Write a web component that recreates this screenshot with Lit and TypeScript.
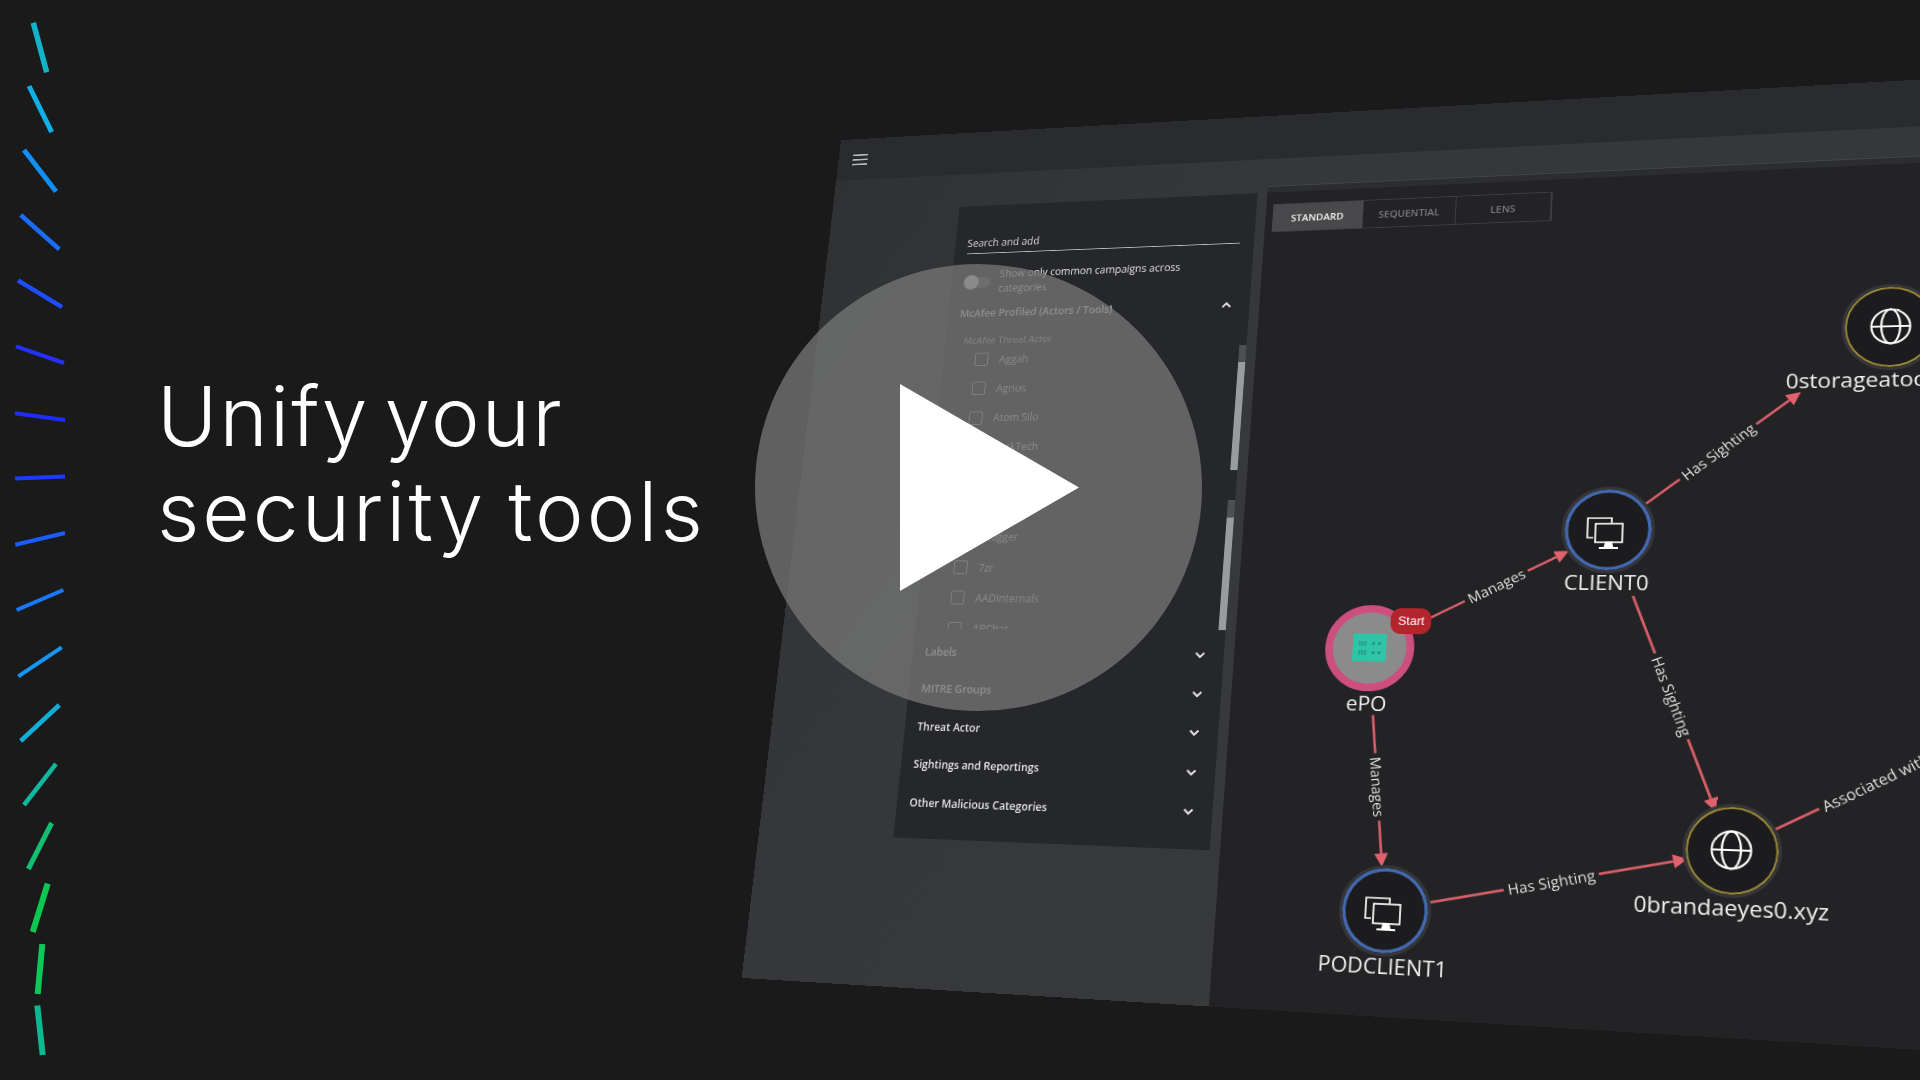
import { LitElement, css, html, svg } from 'lit';
import { customElement } from 'lit/decorators.js';

type Pt = [number, number];

// the product screenshot is a flat window pushed into perspective
const WIN_W = 1260;
const WIN_H = 1000;
const QUAD: Pt[] = [[841, 140], [1980, 76.2], [1985, 1054], [741.7, 978]];

function homography() {
  const [[x0, y0], [x1, y1], [x2, y2], [x3, y3]] = QUAD;
  const dx1 = x1 - x2, dx2 = x3 - x2, sx = x0 - x1 + x2 - x3;
  const dy1 = y1 - y2, dy2 = y3 - y2, sy = y0 - y1 + y2 - y3;
  const den = dx1 * dy2 - dx2 * dy1;
  const g = (sx * dy2 - dx2 * sy) / den;
  const h = (dx1 * sy - sx * dy1) / den;
  return {
    a: x1 - x0 + g * x1, b: x3 - x0 + h * x3, c: x0,
    d: y1 - y0 + g * y1, e: y3 - y0 + h * y3, f: y0, g, h,
  };
}
const M = homography();
const WINDOW_MATRIX = `matrix3d(${[
  M.a / WIN_W, M.d / WIN_W, 0, M.g / WIN_W,
  M.b / WIN_H, M.e / WIN_H, 0, M.h / WIN_H,
  0, 0, 1, 0,
  M.c, M.f, 0, 1,
].join(',')})`;

// screen position in the 1920x1080 shot -> position inside the flat window
function toFlat([x, y]: Pt): Pt {
  const p = M.a - M.g * x, q = M.b - M.h * x, r = x - M.c;
  const s = M.d - M.g * y, t = M.e - M.h * y, w = y - M.f;
  const den = p * t - q * s;
  return [((r * t - q * w) / den) * WIN_W, ((p * w - r * s) / den) * WIN_H];
}

const DASHES = [
  { p: [33.3, 22.7, 46.7, 72.3], c: '#10b4c8', w: 5.5 },
  { p: [29, 86, 51.7, 132.2], c: '#12aee6', w: 5 },
  { p: [24, 150, 56, 191.5], c: '#128ff5', w: 5 },
  { p: [20.7, 215, 59.3, 249.3], c: '#1a6cff', w: 4.5 },
  { p: [18, 280.3, 62, 307.2], c: '#1e4cff', w: 4.5 },
  { p: [16, 346.4, 64, 363], c: '#2430ff', w: 4 },
  { p: [15, 413.2, 65, 420], c: '#1f2cff', w: 4 },
  { p: [15, 478.6, 65, 476.6], c: '#1a3cff', w: 4 },
  { p: [15.3, 544.8, 65, 533], c: '#1a5cff', w: 4 },
  { p: [16.7, 610, 63.3, 590], c: '#1a78ff', w: 4 },
  { p: [18.3, 676.3, 61.7, 647.4], c: '#1596f0', w: 4 },
  { p: [20.7, 741, 59.3, 705], c: '#12aed8', w: 4.5 },
  { p: [24, 805, 56, 763.8], c: '#10b8a0', w: 4.5 },
  { p: [28.3, 869, 51.7, 823], c: '#10c070', w: 5 },
  { p: [32.7, 932, 47.7, 883.6], c: '#0cc850', w: 6 },
  { p: [37.7, 994, 42.3, 944], c: '#0cc858', w: 6 },
  { p: [37.3, 1005.5, 42.7, 1055], c: '#0cb890', w: 6 },
];

const ITEMS = ['Aggah', 'Agrius', 'Atom Silo', 'BlackTech', 'Cerber', 'Dridex', 'Blogger', '7zr', 'AADInternals', 'ABChat'];
const GROUPS = ['Labels', 'MITRE Groups', 'Threat Actor', 'Sightings and Reportings', 'Other Malicious Categories'];

const LINKS: { from: Pt; to: Pt; at: Pt; text: string; arrow: boolean }[] = [
  { from: [1430, 618], to: [1569, 551], at: [1495, 584], text: 'Manages', arrow: true },
  { from: [1373, 715], to: [1382, 867], at: [1377, 787], text: 'Manages', arrow: true },
  { from: [1427, 903], to: [1688, 859], at: [1552, 884], text: 'Has Sighting', arrow: true },
  { from: [1633, 596], to: [1716, 812], at: [1670, 697], text: 'Has Sighting', arrow: true },
  { from: [1643, 506], to: [1801, 392], at: [1718, 452], text: 'Has Sighting', arrow: true },
  { from: [1770, 832], to: [1960, 743], at: [1875, 782], text: 'Associated with', arrow: false },
];

const NODES: { at: Pt; name: string; kind: 'host' | 'site' | 'epo' }[] = [
  { at: [1608, 530], name: 'CLIENT0', kind: 'host' },
  { at: [1385, 911], name: 'PODCLIENT1', kind: 'host' },
  { at: [1369.5, 648], name: 'ePO', kind: 'epo' },
  { at: [1731.5, 850.5], name: '0brandaeyes0.xyz', kind: 'site' },
  { at: [1890.7, 326.7], name: '0storageatools.com', kind: 'site' },
];

const monitors = html`<svg class="glyph" viewBox="-24 -24 48 48" fill="none" stroke="#fff" stroke-width="1.7">
  <path d="M-14 8h-6v-21h24v5" />
  <rect x="-12" y="-7" width="27" height="20" />
  <path d="M-1 13h5l1 4h-7z M-8 19h19" fill="#fff" stroke-width="2" />
</svg>`;

const globe = html`<svg class="glyph" viewBox="-24 -24 48 48" fill="none" stroke="#fff" stroke-width="2">
  <circle r="18.5" />
  <ellipse rx="9" ry="18.5" />
  <path d="M-18.5 0h37" />
</svg>`;

const chip = html`<svg class="chip" viewBox="0 0 35 30">
  <rect width="35" height="30" fill="#2ec4a6" />
  <path d="M7 8v5M10 8v5M13 8v5M7 18v5M10 18v5M13 18v5" stroke="#2a8f80" stroke-width="1.4" />
  <path d="M20 10.500h3M26 10.500h3M20 20.500h3M26 20.500h3" stroke="#2a8f80" stroke-width="2.400" />
</svg>`;

const chevron = (up: boolean) => html`<svg class="chev" viewBox="0 0 12 8" fill="none" stroke="#e4e4e4" stroke-width="2.200">
  <path d=${up ? 'M1.500 6.500 6 2l4.500 4.500' : 'M1.500 1.500 6 6l4.500-4.500'} />
</svg>`;

@customElement('product-window')
export class ProductWindow extends LitElement {
  static get styles() {
    return css`
      :host {
        position: absolute;
        left: 0;
        top: 0;
        width: 1260px;
        height: 1000px;
        transform-origin: 0 0;
        background: #36373a;
        display: flex;
        flex-direction: column;
        overflow: hidden;
        font-family: 'Open Sans', 'Liberation Sans', sans-serif;
        color: #e4e4e4;
      }
      .topbar {
        flex: none;
        height: 53px;
        background: #2a2b2e;
        display: flex;
        align-items: center;
        padding-left: 18px;
      }
      .burger {
        width: 19px;
        height: 14px;
        display: flex;
        flex-direction: column;
        justify-content: space-between;
      }
      .burger i {
        height: 2px;
        background: #b9babb;
      }
      .body {
        flex: 1;
        display: flex;
        min-height: 0;
      }
      .sidebar {
        flex: none;
        width: 522px;
        box-sizing: border-box;
        padding: 41px 11px 0 158.6px;
        background: linear-gradient(120deg, #2f3133, #36373a 48%, #38393b);
      }
      .panel {
        position: relative;
        height: 744px;
        box-sizing: border-box;
        background: #26272a;
        padding: 30px 16px 0 15px;
      }
      .search {
        height: 29px;
        line-height: 33px;
        font-size: 12px;
        color: #d8d8d8;
        border-bottom: 1px solid #bdbdbd;
      }
      .common {
        margin-top: 17px;
        display: flex;
        align-items: center;
        gap: 11px;
        font-size: 12px;
        line-height: 18px;
      }
      .common span {
        width: 230px;
      }
      .switch {
        flex: none;
        width: 32px;
        height: 13px;
        border-radius: 7px;
        background: #57585b;
        position: relative;
      }
      .switch i {
        position: absolute;
        left: 0;
        top: -2.500px;
        width: 18px;
        height: 18px;
        border-radius: 50%;
        background: #d6d6d6;
      }
      .group {
        height: 42.500px;
        padding-right: 4px;
        display: flex;
        align-items: center;
        justify-content: space-between;
        font-size: 12px;
        font-weight: 600;
      }
      .group.open {
        height: 40px;
      }
      .chev {
        width: 12px;
        height: 8px;
      }
      .scroll {
        height: 355px;
        overflow: hidden;
      }
      .scroll h4 {
        margin: 0;
        padding: 8px 0 0 8px;
        font-size: 11px;
        line-height: 11.400px;
        font-weight: 400;
        color: #bdbdbd;
      }
      .item {
        height: 35.300px;
        padding-left: 23.500px;
        display: flex;
        align-items: center;
        gap: 13px;
        font-size: 12px;
        color: #cfcfcf;
      }
      .box {
        flex: none;
        width: 16px;
        height: 16px;
        box-sizing: border-box;
        border: 1.500px solid #b5b5b5;
        border-radius: 2px;
      }
      .groups {
        margin-top: 5.200px;
      }
      .bar {
        position: absolute;
        left: 344px;
        width: 8px;
        background: #4e4f52;
      }
      .bar i {
        position: absolute;
        left: 0;
        right: 0;
        bottom: 0;
        background: #9a9b9d;
      }
      .bar.outer {
        top: 181px;
        height: 145px;
      }
      .bar.outer i {
        height: 125px;
      }
      .bar.inner {
        top: 360px;
        height: 146px;
      }
      .bar.inner i {
        height: 126px;
      }
      .main {
        flex: 1;
        display: flex;
        flex-direction: column;
      }
      .rule {
        flex: none;
        margin-top: 33px;
        height: 8px;
        box-sizing: border-box;
        background: #2c2d30;
        border-top: 1px solid #444548;
      }
      .canvas {
        flex: 1;
        background: #232325;
        padding: 14px 0 0 8px;
      }
      .tabs {
        display: inline-flex;
        border: 1px solid #3d3e40;
        border-left: 0;
      }
      .tab {
        width: 100px;
        height: 32px;
        display: flex;
        align-items: center;
        justify-content: center;
        font-size: 11px;
        font-weight: 600;
        color: #7b7c7e;
        border-right: 1px solid #3d3e40;
      }
      .tab.on {
        background: #49494b;
        color: #f2f2f2;
      }
      .links {
        position: absolute;
        left: 0;
        top: 0;
        width: 1260px;
        height: 1000px;
      }
      .tag {
        position: absolute;
        padding: 0 4px;
        background: #232325;
        color: #e6e6e6;
        font-size: 15px;
        line-height: 18px;
        white-space: nowrap;
      }
      .node {
        position: absolute;
        width: 93px;
        display: flex;
        flex-direction: column;
        align-items: center;
      }
      .disc {
        position: relative;
        flex: none;
        width: 93px;
        height: 93px;
        box-sizing: border-box;
        border-radius: 50%;
        border: 3.500px solid #353639;
        background: #1c1c1e;
        display: flex;
        align-items: center;
        justify-content: center;
      }
      .disc.host {
        box-shadow: inset 0 0 0 3.500px #4468ad;
      }
      .disc.site {
        box-shadow: inset 0 0 0 2px #9c8838;
      }
      .disc.epo {
        border: 8px solid #cc4f7e;
        background: #8b8b8c;
      }
      .glyph {
        width: 48px;
        height: 48px;
      }
      .chip {
        width: 35px;
        height: 30px;
      }
      .start {
        position: absolute;
        left: 59.500px;
        top: -4.500px;
        width: 42px;
        height: 28px;
        border-radius: 11px;
        background: #b2252d;
        color: #fff;
        font-family: 'Liberation Sans', Arial, sans-serif;
        font-size: 13px;
        line-height: 28px;
        text-align: center;
      }
      .name {
        flex: none;
        margin-top: -3px;
        font-size: 21.800px;
        line-height: 26px;
        color: #f0f0f0;
        white-space: nowrap;
      }
      .disc.epo + .name {
        margin-top: 0;
      }
    `;
  }

  connectedCallback() {
    super.connectedCallback();
    this.style.transform = WINDOW_MATRIX;
  }

  private renderLinks() {
    const parts = LINKS.map((l) => {
      const a = toFlat(l.from), b = toFlat(l.to), c = toFlat(l.at);
      const len = Math.hypot(b[0] - a[0], b[1] - a[1]);
      const ux = (b[0] - a[0]) / len, uy = (b[1] - a[1]) / len;
      const along = (c[0] - a[0]) * ux + (c[1] - a[1]) * uy;
      const tag: Pt = [a[0] + ux * along, a[1] + uy * along];
      const deg = (Math.atan2(uy, ux) * 180) / Math.PI;
      const back: Pt = l.arrow ? [b[0] - ux * 14, b[1] - uy * 14] : b;
      const head = `${b[0]},${b[1]} ${back[0] - uy * 7},${back[1] + ux * 7} ${back[0] + uy * 7},${back[1] - ux * 7}`;
      return { a, back, head, tag, deg, l };
    });
    return html`
      <svg class="links" viewBox="0 0 ${WIN_W} ${WIN_H}">
        ${parts.map((p) => svg`
          <line x1=${p.a[0]} y1=${p.a[1]} x2=${p.back[0]} y2=${p.back[1]} stroke="#d9606a" stroke-width="2.600" />
          ${p.l.arrow ? svg`<polygon points=${p.head} fill="#e0626c" />` : ''}
        `)}
      </svg>
      ${parts.map((p) => html`<div
        class="tag"
        style="left:${p.tag[0]}px;top:${p.tag[1]}px;transform:translate(-50%,-50%) rotate(${p.deg}deg)"
      >${p.l.text}</div>`)}
    `;
  }

  private renderNodes() {
    return NODES.map((n) => {
      const [x, y] = toFlat(n.at);
      return html`<div class="node" style="left:${x - 46.5}px;top:${y - 46.5}px">
        <div class="disc ${n.kind}">
          ${n.kind === 'host' ? monitors : n.kind === 'site' ? globe : chip}
          ${n.kind === 'epo' ? html`<span class="start">Start</span>` : ''}
        </div>
        <div class="name">${n.name}</div>
      </div>`;
    });
  }

  render() {
    return html`
      <div class="topbar"><div class="burger"><i></i><i></i><i></i></div></div>
      <div class="body">
        <div class="sidebar">
          <div class="panel">
            <div class="search">Search and add</div>
            <div class="common">
              <div class="switch"><i></i></div>
              <span>Show only common campaigns across categories</span>
            </div>
            <div class="group open">McAfee Profiled (Actors / Tools) ${chevron(true)}</div>
            <div class="scroll">
              <h4>McAfee Threat Actor</h4>
              ${ITEMS.map((name) => html`<div class="item"><div class="box"></div>${name}</div>`)}
            </div>
            <div class="groups">
              ${GROUPS.map((name) => html`<div class="group">${name} ${chevron(false)}</div>`)}
            </div>
            <div class="bar outer"><i></i></div>
            <div class="bar inner"><i></i></div>
          </div>
        </div>
        <div class="main">
          <div class="rule"></div>
          <div class="canvas">
            <div class="tabs">
              <div class="tab on">STANDARD</div>
              <div class="tab">SEQUENTIAL</div>
              <div class="tab">LENS</div>
            </div>
          </div>
        </div>
      </div>
      ${this.renderLinks()}
      ${this.renderNodes()}
    `;
  }
}

@customElement('app-root')
export class AppRoot extends LitElement {
  static get styles() {
    return css`
      :host {
        display: block;
        position: relative;
        width: 1920px;
        height: 1080px;
        overflow: hidden;
        background: #1a1a1a;
      }
      .intro {
        position: relative;
        z-index: 1;
        height: 1080px;
        display: flex;
        align-items: center;
      }
      .rail {
        flex: none;
        width: 80px;
        height: 1080px;
      }
      h1 {
        margin: 0 0 152px 77px;
        font-family: Inter, 'Liberation Sans', sans-serif;
        font-weight: 300;
        font-size: 82px;
        line-height: 95px;
        color: #fff;
        white-space: nowrap;
      }
      h1 span {
        display: block;
      }
      .line-one {
        letter-spacing: 2.200px;
        word-spacing: -10px;
      }
      .line-two {
        letter-spacing: 3px;
        word-spacing: -4px;
      }
      .play {
        position: absolute;
        z-index: 2;
        left: 755px;
        top: 264px;
        width: 447px;
        height: 447px;
        box-sizing: border-box;
        padding-left: 21px;
        border-radius: 50%;
        background: rgba(116, 116, 116, 0.78);
        display: flex;
        align-items: center;
        justify-content: center;
      }
      .play svg {
        width: 179px;
        height: 207px;
      }
    `;
  }

  render() {
    return html`
      <product-window></product-window>
      <div class="intro">
        <svg class="rail" viewBox="0 0 80 1080">
          ${DASHES.map((d) => svg`<line x1=${d.p[0]} y1=${d.p[1]} x2=${d.p[2]} y2=${d.p[3]} stroke=${d.c} stroke-width=${d.w} />`)}
        </svg>
        <h1><span class="line-one">Unify your</span><span class="line-two">security tools</span></h1>
      </div>
      <div class="play">
        <svg viewBox="0 0 179 207"><polygon points="0,0 179,103.500 0,207" fill="#fff" /></svg>
      </div>
    `;
  }
}
